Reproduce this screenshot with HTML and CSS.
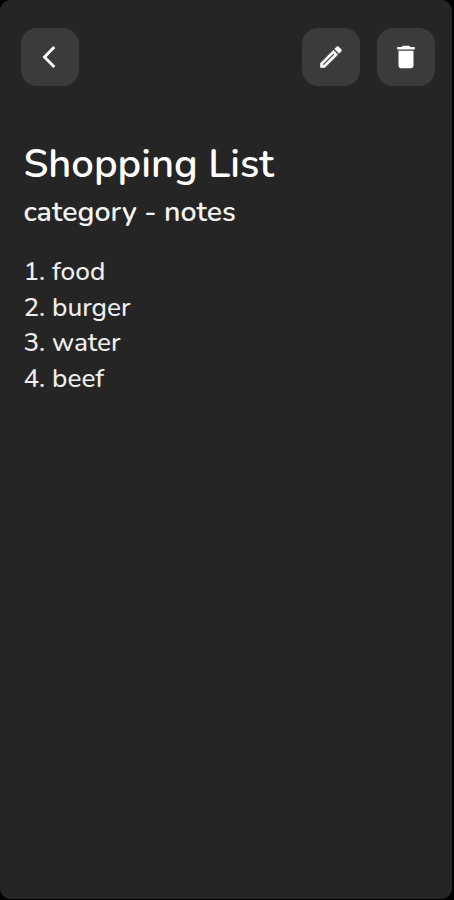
FILE: index.html
```html
<!DOCTYPE html>
<html lang="en">
	<head>
		<meta charset="UTF-8" />
		<meta name="viewport" content="width=device-width, initial-scale=1.0" />
		<title>Shopping List</title>
		<link rel="stylesheet" href="styles.css">
	</head>
	<body>
		<div class="screen">
			<header class="toolbar">
				<button type="button" class="icon-button" aria-label="Back">
					<svg width="30" height="30" viewBox="0 0 30 30"><path d="M19.3 5.1 9.5 15l9.8 9.9" fill="none" stroke="#fff" stroke-width="2.9" /></svg>
				</button>
				<div class="actions">
					<button type="button" class="icon-button" aria-label="Edit">
						<svg width="28" height="28" viewBox="0 0 24 24"><path d="M14.06 9.02l.92.92L5.92 19H5v-.92l9.06-9.06M17.66 3c-.25 0-.51.1-.7.29l-1.83 1.83 3.75 3.75 1.83-1.83c.39-.39.39-1.02 0-1.41l-2.34-2.34c-.2-.2-.45-.29-.71-.29zm-3.6 3.19L3 17.25V21h3.75L17.81 9.94l-3.75-3.75z" fill="#fff" stroke="#fff" stroke-width=".5" /></svg>
					</button>
					<button type="button" class="icon-button" aria-label="Delete">
						<svg width="30" height="30" viewBox="0 0 24 24"><path d="M6 19c0 1.1.9 2 2 2h8c1.1 0 2-.9 2-2V7H6v12zM19 4h-3.5l-1-1h-5l-1 1H5v2h14V4z" fill="#fff" /></svg>
					</button>
				</div>
			</header>
			<main class="note">
				<h1 class="title">Shopping List</h1>
				<h2 class="category">category - notes</h2>
				<div class="content">
					<div>1. food</div>
					<div>2. burger</div>
					<div>3. water</div>
					<div>4. beef</div>
				</div>
			</main>
		</div>
	</body>
</html>
```

FILE: styles.css
```css
* {
	box-sizing: border-box;
}
body {
	margin: 0;
	background-color: #000;
	font-family: Nunito, 'Open Sans', 'Noto Sans', sans-serif;
}
.screen {
	width: 452px;
	height: 899px;
	padding: 28px 17px 0 21px;
	border-radius: 11px;
	background-color: #252525;
}
.toolbar {
	display: flex;
	justify-content: space-between;
}
.actions {
	display: flex;
	gap: 17px;
}
.icon-button {
	display: flex;
	align-items: center;
	justify-content: center;
	width: 58px;
	height: 58px;
	padding: 0;
	border: none;
	border-radius: 16px;
	background-color: #3b3b3b;
}
.note {
	padding: 52px 0 0 2.4px;
	color: #fff;
}
.title {
	margin: 0;
	font-size: 40px;
	font-weight: 600;
	line-height: 52px;
}
.category {
	margin: 7px 0 0;
	color: #f4f4f4;
	font-size: 28.5px;
	font-weight: 600;
	line-height: 30px;
}
.content {
	margin-top: 27px;
	color: #eee;
	font-size: 26.2px;
	font-weight: 500;
	line-height: 35.6px;
}
```
